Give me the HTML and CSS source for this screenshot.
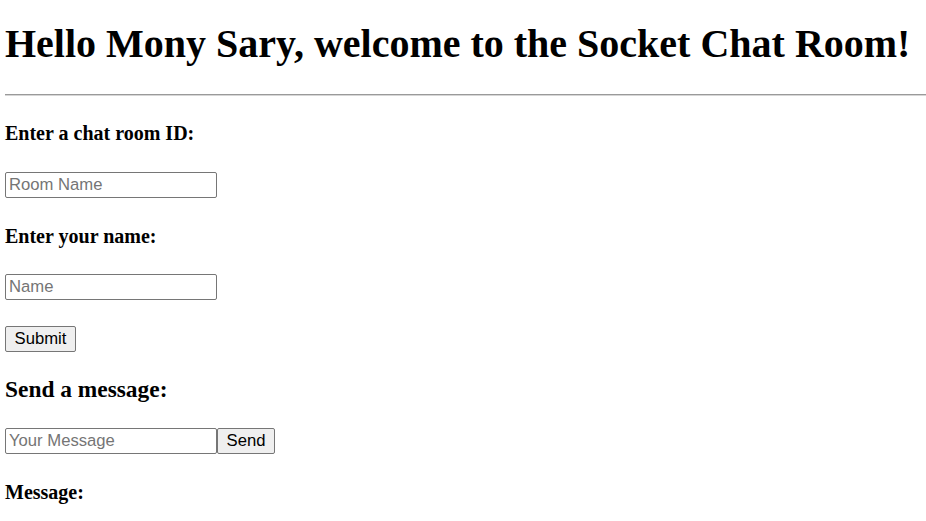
FILE: index.html
```html
<!DOCTYPE html>
<html lang="en">
<head>
<meta charset="utf-8">
<title>Socket Chat Room</title>
<link rel="stylesheet" href="styles.css">
</head>
<body>
<h1 class="title">Hello Mony Sary, welcome to the Socket Chat Room!</h1>
<hr class="rule">
<h4 class="label label-first">Enter a chat room ID:</h4>
<input class="field field-first" type="text" placeholder="Room Name">
<h4 class="label label-name">Enter your name:</h4>
<input class="field field-name" type="text" placeholder="Name">
<button class="btn btn-submit" type="button">Submit</button>
<h3 class="section">Send a message:</h3>
<div class="send-row">
  <input class="field field-msg" type="text" placeholder="Your Message">
  <button class="btn btn-send" type="button">Send</button>
</div>
<h4 class="label label-msg">Message:</h4>
</body>
</html>
```
FILE: styles.css
```css
html, body {
  margin: 0;
  padding: 0;
  background: #ffffff;
}
body {
  padding-left: 5px;
  font-family: "Liberation Serif", "Times New Roman", serif;
  font-size: 20px;
  color: #000000;
}
.title {
  margin: 21px 0 27px;
  font-size: 40px;
  line-height: 46px;
  font-weight: bold;
  white-space: nowrap;
}
.rule {
  margin: 0;
  height: 0;
  border: none;
  border-top: 1px solid #9a9a9a;
  border-bottom: 1px solid #d6d6d6;
}
.label {
  margin: 0;
  font-size: 20px;
  line-height: 23px;
  font-weight: bold;
}
.label-first { margin-top: 26px; }
.label-name { margin-top: 27px; }
.label-msg { margin-top: 27px; }
.section {
  margin: 24px 0 0;
  font-size: 23.4px;
  line-height: 27px;
  font-weight: bold;
}
.field {
  display: block;
  box-sizing: border-box;
  width: 212px;
  height: 26px;
  margin: 0;
  padding: 0 3px;
  border: 1px solid #767676;
  border-radius: 2px;
  background: #ffffff;
  font-family: "Liberation Sans", Arial, sans-serif;
  font-size: 16.67px;
  color: #000000;
}
.field::placeholder { color: #757575; }
.field-first { margin-top: 27px; }
.field-name { margin-top: 26px; }
.btn {
  display: block;
  box-sizing: border-box;
  height: 26px;
  margin: 0;
  padding: 0;
  border: 1px solid #767676;
  border-radius: 2px;
  background: #efefef;
  font-family: "Liberation Sans", Arial, sans-serif;
  font-size: 16.67px;
  color: #000000;
  text-align: center;
}
.btn-submit {
  width: 71px;
  margin-top: 26px;
}
.btn-send { width: 58px; }
.send-row {
  display: flex;
  margin-top: 25px;
}
```
